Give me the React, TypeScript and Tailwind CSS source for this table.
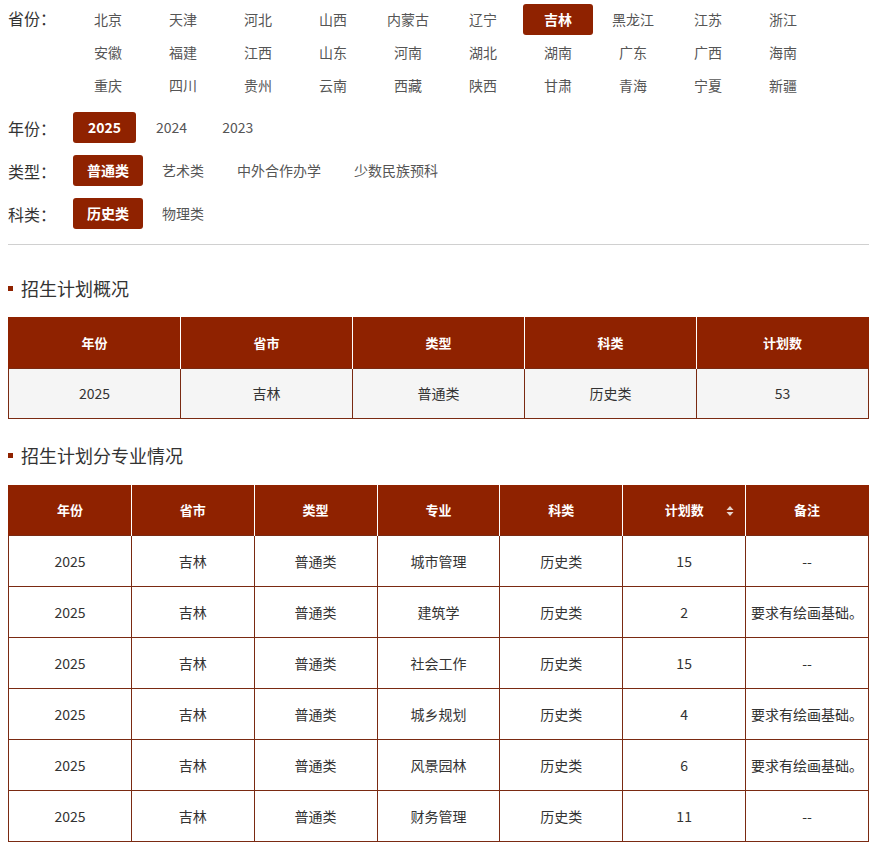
import React from 'react'

const provinces = [
  '北京', '天津', '河北', '山西', '内蒙古', '辽宁', '吉林', '黑龙江', '江苏', '浙江',
  '安徽', '福建', '江西', '山东', '河南', '湖北', '湖南', '广东', '广西', '海南',
  '重庆', '四川', '贵州', '云南', '西藏', '陕西', '甘肃', '青海', '宁夏', '新疆',
]

const majors = [
  { name: '城市管理', count: 15, note: '--' },
  { name: '建筑学', count: 2, note: '要求有绘画基础。' },
  { name: '社会工作', count: 15, note: '--' },
  { name: '城乡规划', count: 4, note: '要求有绘画基础。' },
  { name: '风景园林', count: 6, note: '要求有绘画基础。' },
  { name: '财务管理', count: 11, note: '--' },
]

const FilterRow = ({ label, items, active, pad }: { label: string; items: string[]; active: string; pad: string }) => {
  return (
    <div className="flex items-start mt-[11px]">
      <div className="w-[65px] shrink-0 text-[16px] text-[#333] leading-[32px]">{label}</div>
      <div className="flex gap-x-[5px]">
        {items.map((it) => (
          <span
            key={it}
            className={
              it === active
                ? `h-[31px] ${pad} leading-[31px] text-[14px] rounded-[3px] bg-[#8f2200] text-white font-semibold`
                : `h-[31px] ${pad} leading-[31px] text-[14px] text-[#555]`
            }
          >
            {it}
          </span>
        ))}
      </div>
    </div>
  )
}

const SectionTitle = ({ title, top }: { title: string; top: string }) => (
  <div className={`flex items-center ${top} mb-[16px] h-[26px]`}>
    <span className="w-[5px] h-[5px] bg-[#8f2200] mr-[8px]" />
    <span className="text-[18px] text-[#333]">{title}</span>
  </div>
)

const SortIcon = () => (
  <svg width="8" height="12" viewBox="0 0 8 12" className="inline-block ml-[22px] align-middle">
    <path d="M4 1 L7.5 5 L0.5 5 Z" fill="#e6d6d0" />
    <path d="M4 11 L7.5 7 L0.5 7 Z" fill="#e6d6d0" />
  </svg>
)

const App = () => {
  const th = 'h-[51px] border-x border-white first:border-l-[#8f2200] last:border-r-[#8f2200] text-[13px] font-bold text-white text-center'
  const td = 'h-[51px] border border-[#7a2a12] text-[14px] text-[#333] text-center'
  return (
    <div className="pl-[8px] pr-[6px] pb-[4px] bg-white" style={{ fontFamily: '"Noto Sans CJK SC", "Noto Sans", sans-serif' }}>
      <div className="flex items-start pt-[4px]">
        <div className="w-[65px] shrink-0 text-[16px] text-[#333] leading-[28px]">省份：</div>
        <div className="grid grid-cols-[repeat(10,70px)] gap-x-[5px] gap-y-[2px]">
          {provinces.map((p) => (
            <span
              key={p}
              className={
                p === '吉林'
                  ? 'h-[31px] leading-[31px] text-center text-[14px] rounded-[3px] bg-[#8f2200] text-white font-semibold'
                  : 'h-[31px] leading-[31px] text-center text-[14px] text-[#555]'
              }
            >
              {p}
            </span>
          ))}
        </div>
      </div>
      <FilterRow label="年份：" items={['2025', '2024', '2023']} active="2025" pad="px-[15px]" />
      <FilterRow label="类型：" items={['普通类', '艺术类', '中外合作办学', '少数民族预科']} active="普通类" pad="px-[14px]" />
      <FilterRow label="科类：" items={['历史类', '物理类']} active="历史类" pad="px-[14px]" />
      <div className="mt-[14px] border-t border-[#d0d0d0]" />

      <SectionTitle title="招生计划概况" top="mt-[30px]" />
      <table className="w-full border-collapse table-fixed">
        <thead>
          <tr className="bg-[#8f2200]">
            {['年份', '省市', '类型', '科类', '计划数'].map((h) => (
              <th key={h} className={th}>{h}</th>
            ))}
          </tr>
        </thead>
        <tbody>
          <tr className="bg-[#f5f5f5]">
            {['2025', '吉林', '普通类', '历史类', '53'].map((v, i) => (
              <td key={i} className="h-[50px] border border-[#7a2a12] text-[14px] text-[#333] text-center">{v}</td>
            ))}
          </tr>
        </tbody>
      </table>

      <SectionTitle title="招生计划分专业情况" top="mt-[24px]" />
      <table className="w-full border-collapse table-fixed">
        <thead>
          <tr className="bg-[#8f2200]">
            {['年份', '省市', '类型', '专业', '科类'].map((h) => (
              <th key={h} className={th}>{h}</th>
            ))}
            <th className={th}>
              <span className="ml-[30px]">计划数</span>
              <SortIcon />
            </th>
            <th className={th}>备注</th>
          </tr>
        </thead>
        <tbody>
          {majors.map((m) => (
            <tr key={m.name} className="bg-white">
              <td className={td}>2025</td>
              <td className={td}>吉林</td>
              <td className={td}>普通类</td>
              <td className={td}>{m.name}</td>
              <td className={td}>历史类</td>
              <td className={td}>{m.count}</td>
              <td className={td}>{m.note}</td>
            </tr>
          ))}
        </tbody>
      </table>
    </div>
  )
}

export default App
